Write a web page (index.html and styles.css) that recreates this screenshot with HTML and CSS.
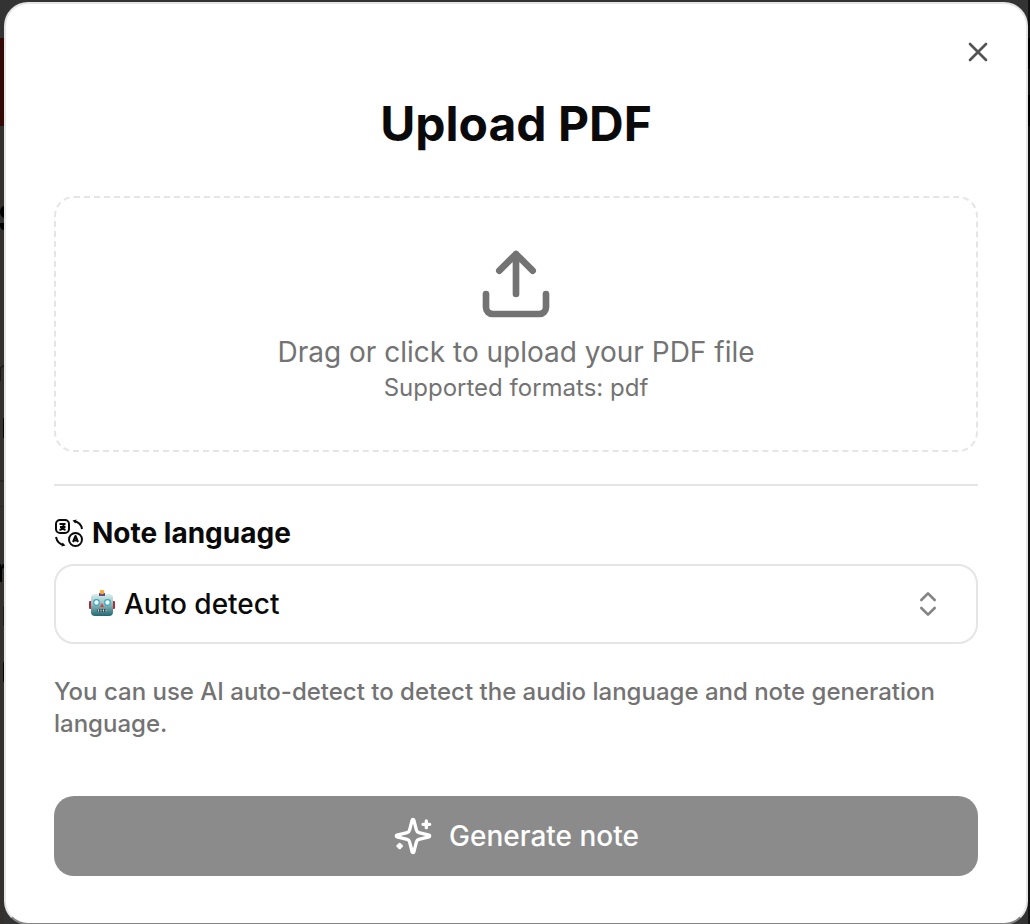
FILE: index.html
```html
<!DOCTYPE html>
<html lang="en">
<head>
<meta charset="utf-8">
<meta name="viewport" content="width=device-width, initial-scale=1">
<title>Upload PDF</title>
<link rel="stylesheet" href="styles.css">
</head>
<body>
<svg class="backdrop backdrop-left" viewBox="0 0 4 924" aria-hidden="true">
  <path fill="#333" d="M0 0h4v38H0z"/>
  <path fill="#340805" d="M0 38h4v88H0z"/>
  <path fill="#33312f" d="M0 126h4v798H0z"/>
  <path fill="#000" d="M4 206q-4 1-4 6 0 4 4 6zM0 223h4v7q-3 0-4-4zM3 418h1v20H3zM0 564h1v3q1-3 3-3v4q-2 0-2 3v11H0zM3 662h1v20H3z"/>
  <path fill="#1b1a19" d="M0 367h1q1-2 3-2v2q-3 0-3 3v11H0zM3 606h1v20H3z"/>
  <path fill="#292726" d="M0 480h4v2H0zM0 506h4v1H0z"/>
</svg>
<svg class="backdrop backdrop-right" viewBox="0 0 2 924" aria-hidden="true">
  <path fill="#111" d="M0 0h2v924H0z"/>
  <path fill="#000" d="M0 38h2v31H0zM0 95h2v31H0z"/>
</svg>
<main class="dialog" role="dialog" aria-labelledby="dialog-title">
  <button class="close" type="button" aria-label="Close">
    <svg class="close-icon" viewBox="0 0 24 24" aria-hidden="true"><path d="M18 6 6 18M6 6l12 12"/></svg>
  </button>
  <h1 class="title" id="dialog-title">Upload PDF</h1>
  <button class="dropzone" type="button">
    <svg class="upload-icon" viewBox="0 0 24 24" aria-hidden="true"><path d="M21 15v4a2 2 0 0 1-2 2H5a2 2 0 0 1-2-2v-4M17 8l-5-5-5 5M12 3v12"/></svg>
    <span class="drop-text">Drag or click to upload your PDF file</span>
    <span class="drop-formats">Supported formats: pdf</span>
  </button>
  <hr class="divider">
  <label class="field-label" for="language">
    <svg class="language-icon" viewBox="0 0 30 30" aria-hidden="true">
      <rect x="2" y="2" width="13" height="13" rx="4"/>
      <circle cx="21.500" cy="21.500" r="6.500"/>
      <path d="M5.500 6h6M8.500 5.500v1M6 9h5.500M9.500 7q0 4-4 5M8.500 9.500q1 2 3 2.500"/>
      <path d="M19 24l2.500-6 2.500 6M20 22.500h3"/>
      <path d="M20 3q7 1.500 8 8M2 19q1.500 7 8 8"/>
      <path class="arrow-tip" d="M18.500 2.500l4-1-1 4zM11.500 27.500l-4 1 1-4z"/>
    </svg>
    <span>Note language</span>
  </label>
  <div class="select-box">
    <svg class="robot-icon" viewBox="0 0 28 28" aria-hidden="true">
      <defs>
        <linearGradient id="face" x1="0" y1="0" x2="0" y2="1"><stop offset="0" stop-color="#dcefed"/><stop offset=".45" stop-color="#94bdc0"/><stop offset="1" stop-color="#206873"/></linearGradient>
      </defs>
      <rect x="1" y="11" width="3" height="8" rx="1" fill="#b02c33"/>
      <rect x="24" y="11" width="3" height="8" rx="1" fill="#b02c33"/>
      <rect x="3" y="4" width="22" height="22" rx="4" fill="url(#face)"/>
      <path d="M11 3h6v3h-6z" fill="#67488b"/>
      <circle cx="14" cy="2" r="2.300" fill="#f4ad32"/>
      <circle cx="8.500" cy="12.500" r="2.800" fill="#fff" stroke="#2fa9c2" stroke-width="1.200"/>
      <circle cx="19.500" cy="12.500" r="2.800" fill="#fff" stroke="#2fa9c2" stroke-width="1.200"/>
      <path d="M14 13l2 4h-4z" fill="#e53d36"/>
      <rect x="9" y="19" width="10" height="3" rx="1.500" fill="#34515b"/>
      <path d="M10.500 19.500v2M13 19.500v2M15.500 19.500v2M18 19.500v2" stroke="#dce6e8"/>
    </svg>
    <select class="select" id="language"><option>Auto detect</option><option>English</option></select>
    <svg class="chevrons" viewBox="0 0 24 24" aria-hidden="true"><path d="m7 15 5 5 5-5M7 9l5-5 5 5"/></svg>
  </div>
  <p class="hint">You can use AI auto-detect to detect the audio language and note generation language.</p>
  <button class="generate" type="button">
    <svg class="sparkles" viewBox="0 0 24 24" aria-hidden="true"><path d="M9.937 15.500A2 2 0 0 0 8.500 14.063l-6.135-1.582a.5.5 0 0 1 0-.962L8.500 9.936A2 2 0 0 0 9.937 8.500l1.582-6.135a.5.5 0 0 1 .963 0L14.063 8.500A2 2 0 0 0 15.500 9.937l6.135 1.581a.5.5 0 0 1 0 .964L15.500 14.063a2 2 0 0 0-1.437 1.437l-1.582 6.135a.5.5 0 0 1-.963 0zM20 3v4M22 5h-4M4 17v2M5 18H3"/></svg>
    <span>Generate note</span>
  </button>
</main>
</body>
</html>
```
FILE: styles.css
```css
* { box-sizing: border-box; }

body {
  margin: 0;
  padding: 2px 2px 0 4px;
  overflow: hidden;
  background: #333;
  color: #0a0a0a;
  font-family: Inter, "Liberation Sans", sans-serif;
  font-optical-sizing: none;
}

button, select { font: inherit; color: inherit; margin: 0; }

svg { fill: none; flex: none; }

.backdrop { position: absolute; top: 0; height: 924px; }
.backdrop-left { left: 0; width: 4px; }
.backdrop-right { right: 0; width: 2px; }

.dialog {
  position: relative;
  display: flex;
  flex-direction: column;
  padding: 96px 48px 47px;
  background: #fff;
  border: 2px solid #e5e5e5;
  border-bottom-color: #858585;
  border-radius: 24px;
}

.close {
  position: absolute;
  top: 32px;
  right: 32px;
  display: flex;
  padding: 0;
  border: 0;
  background: none;
}
.close-icon { width: 32px; height: 32px; stroke: #545454; stroke-width: 2; stroke-linecap: round; }

.title {
  margin: 0 0 48px;
  font-size: 48px;
  line-height: 48px;
  font-weight: 700;
  font-optical-sizing: auto;
  text-align: center;
}

.dropzone {
  display: flex;
  flex-direction: column;
  align-items: center;
  padding: 46px;
  border: 2px dashed #e5e5e5;
  border-radius: 20px;
  background: none;
  color: #737373;
}
.upload-icon {
  width: 80px;
  height: 80px;
  margin-bottom: 8px;
  stroke: #737373;
  stroke-width: 2;
  stroke-linecap: round;
  stroke-linejoin: round;
}
.drop-text { font-size: 28px; line-height: 40px; }
.drop-formats { font-size: 24px; line-height: 32px; }

.divider { width: 100%; height: 2px; margin: 32px 0; border: 0; background: #e5e5e5; }

.field-label {
  display: flex;
  align-items: center;
  gap: 8px;
  margin-bottom: 16px;
  font-size: 28px;
  line-height: 30px;
  font-weight: 700;
}
.language-icon { width: 30px; height: 30px; stroke: #0a0a0a; stroke-width: 2; stroke-linejoin: round; }
.arrow-tip { fill: #0a0a0a; stroke: none; }

.select-box {
  position: relative;
  display: flex;
  align-items: center;
  height: 80px;
  border: 2px solid #e5e5e5;
  border-radius: 20px;
}
.robot-icon { position: absolute; left: 32px; width: 28px; height: 28px; }
.select {
  width: 100%;
  height: 100%;
  padding: 0 68px;
  border: 0;
  border-radius: 18px;
  background: none;
  appearance: none;
  font-size: 28px;
  font-weight: 500;
}
.chevrons {
  position: absolute;
  right: 32px;
  width: 32px;
  height: 32px;
  stroke: #858585;
  stroke-width: 2;
  stroke-linecap: round;
  stroke-linejoin: round;
  pointer-events: none;
}

.hint { margin: 32px 0 56px; color: #737373; font-size: 24px; line-height: 32px; font-weight: 500; }

.generate {
  display: flex;
  align-items: center;
  justify-content: center;
  gap: 16px;
  height: 80px;
  border: 0;
  border-radius: 20px;
  background: #8b8b8b;
  color: #fff;
  font-size: 28px;
  font-weight: 500;
}
.sparkles { width: 40px; height: 40px; stroke: #fff; stroke-width: 2; stroke-linecap: round; stroke-linejoin: round; }
```
